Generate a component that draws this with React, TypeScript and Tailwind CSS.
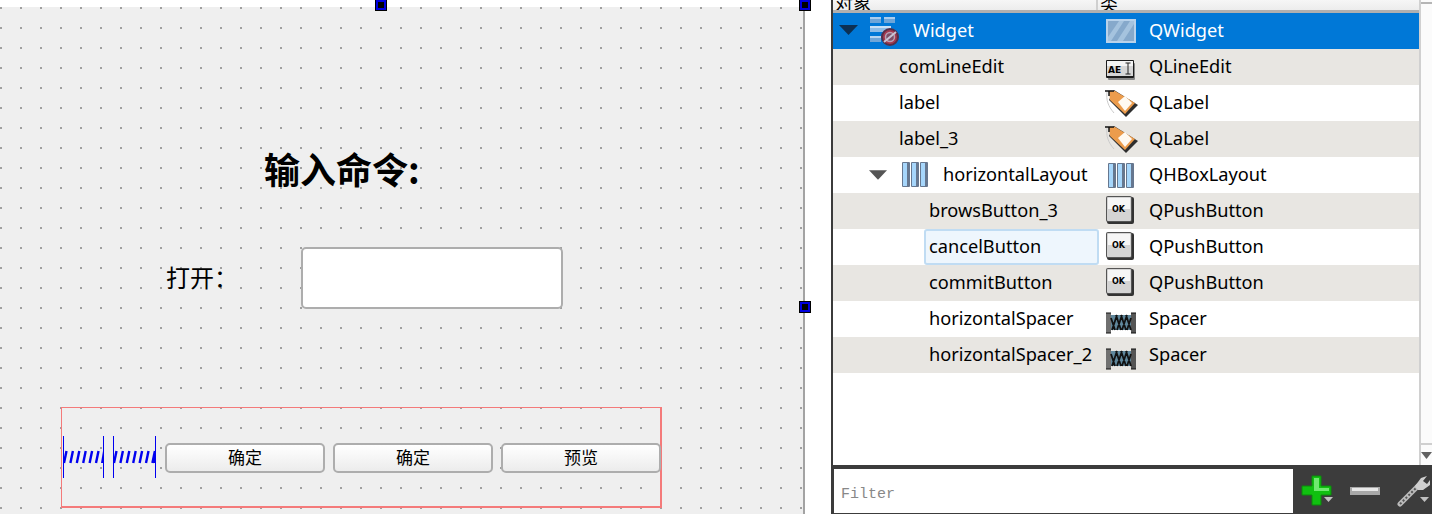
import React from "react";

const cjk = "font-['Noto_Sans_CJK_SC',sans-serif]";

function Handle({ className }: { className: string }) {
  return <div className={"absolute w-[10px] h-[10px] bg-black border-2 border-[#0000e0] outline outline-black " + className}></div>;
}

function Arrow({ dark }: { dark?: boolean }) {
  return (
    <svg width="19" height="10" viewBox="0 0 19 10">
      <path d="M0 0H19L9.500 10Z" fill={dark ? "#0c3054" : "#555"} />
    </svg>
  );
}

function WidgetIcon() {
  return (
    <svg width="34" height="32" viewBox="0 0 34 32">
      <rect x="0" y="2" width="11" height="6" fill="#6ea5d8" />
      <rect x="14" y="2" width="11" height="6" fill="#6ea5d8" />
      <rect x="0" y="2" width="11" height="2" fill="#a9cdee" />
      <rect x="14" y="2" width="11" height="2" fill="#a9cdee" />
      <rect x="0" y="11" width="21" height="6" fill="#8ebce6" />
      <rect x="0" y="11" width="21" height="2" fill="#c9e0f5" />
      <rect x="0" y="21" width="11" height="6" fill="#6ea5d8" />
      <rect x="0" y="21" width="11" height="2" fill="#b5d4f0" />
      <circle cx="20" cy="22" r="8" fill="#a63a50" stroke="#55304a" strokeWidth="2" />
      <circle cx="20" cy="22" r="4.500" fill="#7d4e68" stroke="#b8a0b5" strokeWidth="1.500" />
      <path d="M14 27L26 17" stroke="#c7c3d4" strokeWidth="2" />
    </svg>
  );
}

function QWidgetIcon() {
  return (
    <svg width="30" height="24" viewBox="0 0 30 24">
      <rect width="30" height="24" fill="#b9d2ea" />
      <rect x="2" y="2" width="26" height="20" fill="#86a9cb" />
      <path d="M2 18L13 2H18L5 22H2ZM11 22L24 2H28V5L17 22Z" fill="#a5c3de" />
    </svg>
  );
}

function LineEditIcon() {
  return (
    <svg width="30" height="20" viewBox="0 0 30 20" className="mt-1.5">
      <rect x="2" y="3" width="27" height="17" rx="1" fill="#888" />
      <rect x="0" y="0" width="28" height="18" rx="1" fill="#1c1c1c" />
      <rect x="1" y="1" width="26" height="5" fill="#f4f4f4" />
      <rect x="1" y="6" width="26" height="10" fill="#d6d6d6" />
      <text x="2" y="13" fontFamily="DejaVu Sans" fontSize="9" fontWeight="700" fill="#000">AE</text>
      <path d="M19.500 3H24.500M22 3V14M19.500 14H24.500" stroke="#222" strokeWidth="1" fill="none" />
    </svg>
  );
}

function LabelIcon() {
  return (
    <svg width="33" height="32" viewBox="0 0 33 32" className="-ml-px -mt-0.5">
      <path d="M2 6C1 14 3 20 9 27" stroke="#ccc" strokeWidth="1" fill="none" />
      <path d="M9 4L33 19L21 31L4 14Z" fill="#2e2e2e" />
      <path d="M4 5H10L30 17L20 28L5 14Z" fill="#ec9c4c" />
      <path d="M13 16L20 10L27 17L20 25Z" fill="#fffaf2" />
      <path d="M0 5H9" stroke="#111" strokeWidth="1.500" />
      <path d="M4 5V10" stroke="#111" strokeWidth="1.500" />
    </svg>
  );
}

function LayoutIcon() {
  return (
    <svg width="26" height="25" viewBox="0 0 26 25">
      {[0, 9, 18].map((x) => (
        <g key={x}>
          <rect x={x} y="0" width="8" height="25" rx="1" fill="#66778f" />
          <rect x={x + 1} y="1" width="4" height="23" fill="#a6d6fb" />
        </g>
      ))}
    </svg>
  );
}

function ButtonIcon() {
  return (
    <svg width="30" height="28" viewBox="0 0 30 28" className="-mt-[3px]">
      <rect x="1" y="1" width="27" height="27" rx="2" fill="#333" />
      <rect x="0" y="0" width="26" height="26" rx="2" fill="#555" />
      <rect x="1" y="1" width="24" height="24" rx="1" fill="#d4d4d4" />
      <rect x="2" y="2" width="22" height="11" fill="#f6f6f6" />
      <text x="6" y="15.500" fontFamily="DejaVu Sans" fontSize="8" fontWeight="700" fill="#000">OK</text>
    </svg>
  );
}

function SpacerIcon() {
  return (
    <svg width="31" height="22" viewBox="0 0 31 22" className="mt-[7px]">
      <rect x="0" y="1" width="5" height="20" fill="#707070" />
      <rect x="25" y="1" width="5" height="20" fill="#555" />
      <rect x="5" y="3" width="20" height="15" fill="#5f879c" />
      <path d="M6 18L11 3M11 18L16 3M16 18L21 3M21 18L25 6M5 6L9 18M10 3L15 18M15 3L20 18M20 3L25 18" stroke="#111" strokeWidth="1.800" />
      <path d="M0 1H5M25 1H30M0 21H5M25 21H30" stroke="#111" strokeWidth="1.200" />
    </svg>
  );
}

function HSpring({ width }: { width: number }) {
  const strokes: number[] = [];
  for (let x = 1; x < width - 3; x += 6.4) strokes.push(x);
  return (
    <svg width={width} height="42" viewBox={`0 0 ${width} 42`} className="shrink-0">
      <path d={`M0.5 0V42M${width - 0.5} 0V42`} stroke="#0000f0" strokeWidth="1" shapeRendering="crispEdges" />
      {strokes.map((x) => (
        <path key={x} d={`M${x} 27L${x + 2.5} 15`} stroke="#0000f0" strokeWidth="2.400" />
      ))}
      <path d={`M${width - 3} 27L${width - 1} 15V27Z`} fill="#0000f0" />
    </svg>
  );
}

function FormButton({ label }: { label: string }) {
  return (
    <button
      className={
        "w-[160px] h-[30px] pb-1 shrink-0 rounded-[5px] border-2 border-[#adadad] bg-gradient-to-b from-white to-[#ececec] text-[17px] leading-none text-black " +
        cjk
      }
    >
      {label}
    </button>
  );
}

type Row = {
  name: string;
  type: string;
  icon: React.ReactNode;
  depth: number;
  arrow?: boolean;
  own?: React.ReactNode;
  alt?: boolean;
};

const rows: Row[] = [
  { name: "comLineEdit", type: "QLineEdit", icon: <LineEditIcon />, depth: 1, alt: true },
  { name: "label", type: "QLabel", icon: <LabelIcon />, depth: 1 },
  { name: "label_3", type: "QLabel", icon: <LabelIcon />, depth: 1, alt: true },
  { name: "horizontalLayout", type: "QHBoxLayout", icon: <div className="ml-0.5 flex"><LayoutIcon /></div>, depth: 2, arrow: true, own: <LayoutIcon /> },
  { name: "browsButton_3", type: "QPushButton", icon: <ButtonIcon />, depth: 3, alt: true },
  { name: "cancelButton", type: "QPushButton", icon: <ButtonIcon />, depth: 3 },
  { name: "commitButton", type: "QPushButton", icon: <ButtonIcon />, depth: 3, alt: true },
  { name: "horizontalSpacer", type: "Spacer", icon: <SpacerIcon />, depth: 3 },
  { name: "horizontalSpacer_2", type: "Spacer", icon: <SpacerIcon />, depth: 3, alt: true },
];

function TreeRow({ row }: { row: Row }) {
  const focused = row.name === "cancelButton";
  return (
    <div className={"flex h-9 items-center " + (row.alt ? "bg-[#e8e6e2]" : "bg-white")}>
      <div className="w-[264px] h-full flex items-center shrink-0">
        {row.arrow ? (
          <div className="flex items-center">
            <div className="ml-9 w-[18px] flex"><Arrow /></div>
            <div className="ml-[15px] w-[28px] flex">{row.own}</div>
            <span className="ml-[13px] whitespace-nowrap">{row.name}</span>
          </div>
        ) : focused ? (
          <div className="ml-[91px] w-[175px] h-[36px] flex items-center pl-[3px] bg-[#eef6fd] border-2 border-[#c0dcf3] rounded-[3px] shrink-0">
            {row.name}
          </div>
        ) : (
          <span className={"whitespace-nowrap " + (row.depth === 1 ? "ml-[66px]" : "ml-[96px]")}>{row.name}</span>
        )}
      </div>
      <div className="w-[52px] h-full pl-[9px] flex items-center shrink-0">{row.icon}</div>
      <span className="whitespace-nowrap">{row.type}</span>
    </div>
  );
}

export default function App() {
  return (
    <div className="w-[1432px] h-[514px] flex bg-white overflow-hidden text-[18.2px] text-black font-['Noto_Sans','Noto_Sans_CJK_SC',sans-serif]">
      {/* form canvas */}
      <div className="w-[805px] h-full pt-[7px] shrink-0">
        <div className="relative h-[507px] bg-[#efefef] border-r-2 border-[#a3a3a3] bg-[radial-gradient(circle_at_1px_1px,#a0a0a0_1px,transparent_1px)] bg-[size:20px_20px]">
          <Handle className="left-[376px] -top-[7px]" />
          <Handle className="left-[800px] -top-[7px]" />
          <Handle className="left-[800px] top-[295px]" />

          <div className={"absolute left-[264px] top-[136px] text-[36px] leading-[50px] font-bold whitespace-nowrap " + cjk}>输入命令:</div>
          <div className={"absolute left-[166px] top-[253px] text-[24px] leading-[34px] whitespace-nowrap " + cjk}>打开：</div>
          <div className="absolute left-[301px] top-[240px] w-[262px] h-[62px] bg-white border-2 border-[#adadad] rounded-[5px]"></div>

          <div className="absolute left-[61px] top-[400px] w-[601px] h-[101px] border border-[#f47a7a] border-b-2 border-r-2 flex items-center">
            <div className="ml-px flex items-center gap-[9px]">
              <HSpring width={41} />
              <HSpring width={43} />
            </div>
            <div className="ml-[9px] mt-0.5 flex gap-2 shrink-0">
              <FormButton label="确定" />
              <FormButton label="确定" />
              <FormButton label="预览" />
            </div>
          </div>
        </div>
      </div>

      {/* object inspector */}
      <div className="flex-1 ml-[26px] flex flex-col border-l-2 border-[#3b3b3b] min-w-0">
        <div className="flex-1 flex min-h-0">
          <div className="flex-1 bg-white min-w-0 flex flex-col">
            <div className="h-[13px] flex overflow-hidden bg-gradient-to-b from-[#f6f6f6] to-[#ececec] border-b-[3px] border-[#b0b0b0] shrink-0">
              <div className={"w-[265px] border-r-2 border-[#cfcfcf] text-[18px] leading-[12px] -mt-[4px] pl-0.5 " + cjk}>对象</div>
              <div className={"text-[18px] leading-[12px] -mt-[4px] pl-0.5 " + cjk}>类</div>
            </div>
            <div className="flex h-9 items-center bg-[#0078d7] text-white">
              <div className="w-[264px] flex items-center shrink-0">
                <div className="ml-1.5 -mt-0.5 flex"><Arrow dark /></div>
                <div className="ml-[12px] flex"><WidgetIcon /></div>
                <span className="ml-[9px]">Widget</span>
              </div>
              <div className="w-[52px] pl-[9px] flex items-center shrink-0"><QWidgetIcon /></div>
              <span>QWidget</span>
            </div>
            {rows.map((r) => (
              <TreeRow key={r.name} row={r} />
            ))}
          </div>
          <div className="w-[13px] shrink-0 bg-[#fbfbfb] border-l-2 border-[#d0d0d0] flex flex-col">
            <div className="h-[2px] mt-0.5 bg-[#b5b5b5]"></div>
            <div className="flex-1"></div>
            <div className="h-[22px] border-t-2 border-[#cfcfcf] flex items-center justify-center">
              <svg width="11" height="7" viewBox="0 0 11 7"><path d="M0 0H11L5.500 7Z" fill="#606060" /></svg>
            </div>
          </div>
        </div>
        <div className="h-[49px] shrink-0 bg-[#3c3c3c] flex pt-1 pb-px">
          <div className="w-[459px] ml-px bg-white font-['Liberation_Mono',monospace] text-[15px] text-[#888] flex items-center pl-[7px] pt-2 shrink-0">Filter</div>
          <div className="flex items-center gap-[17px] ml-[8px]">
            <svg width="32" height="32" viewBox="0 0 32 32">
              <path d="M11 1H20V11H30V20H20V30H11V20H1V11H11Z" fill="#10c010" stroke="#0a8a0a" />
              <path d="M13 3H18V13H28V16H13Z" fill="#6fe96f" />
              <path d="M23 22H32L27.500 27Z" fill="#c0c0c0" />
            </svg>
            <svg width="30" height="8" viewBox="0 0 30 8">
              <rect width="30" height="8" fill="#a8a8a8" />
              <rect x="2" y="1" width="26" height="3" fill="#e8e8e8" />
            </svg>
            <svg width="34" height="32" viewBox="0 0 34 32">
              <path d="M3 29L21 11" stroke="#bbb" strokeWidth="5" strokeLinecap="round" />
              <path d="M3 29L21 11" stroke="#555" strokeWidth="2" strokeDasharray="2 2" />
              <path d="M18 11L24 3L30 1L26 6L30 9L33 5V10L26 15L21 15Z" fill="#cfcfcf" />
              <path d="M23 22H32L27.500 27Z" fill="#c0c0c0" />
            </svg>
          </div>
        </div>
      </div>
    </div>
  );
}
